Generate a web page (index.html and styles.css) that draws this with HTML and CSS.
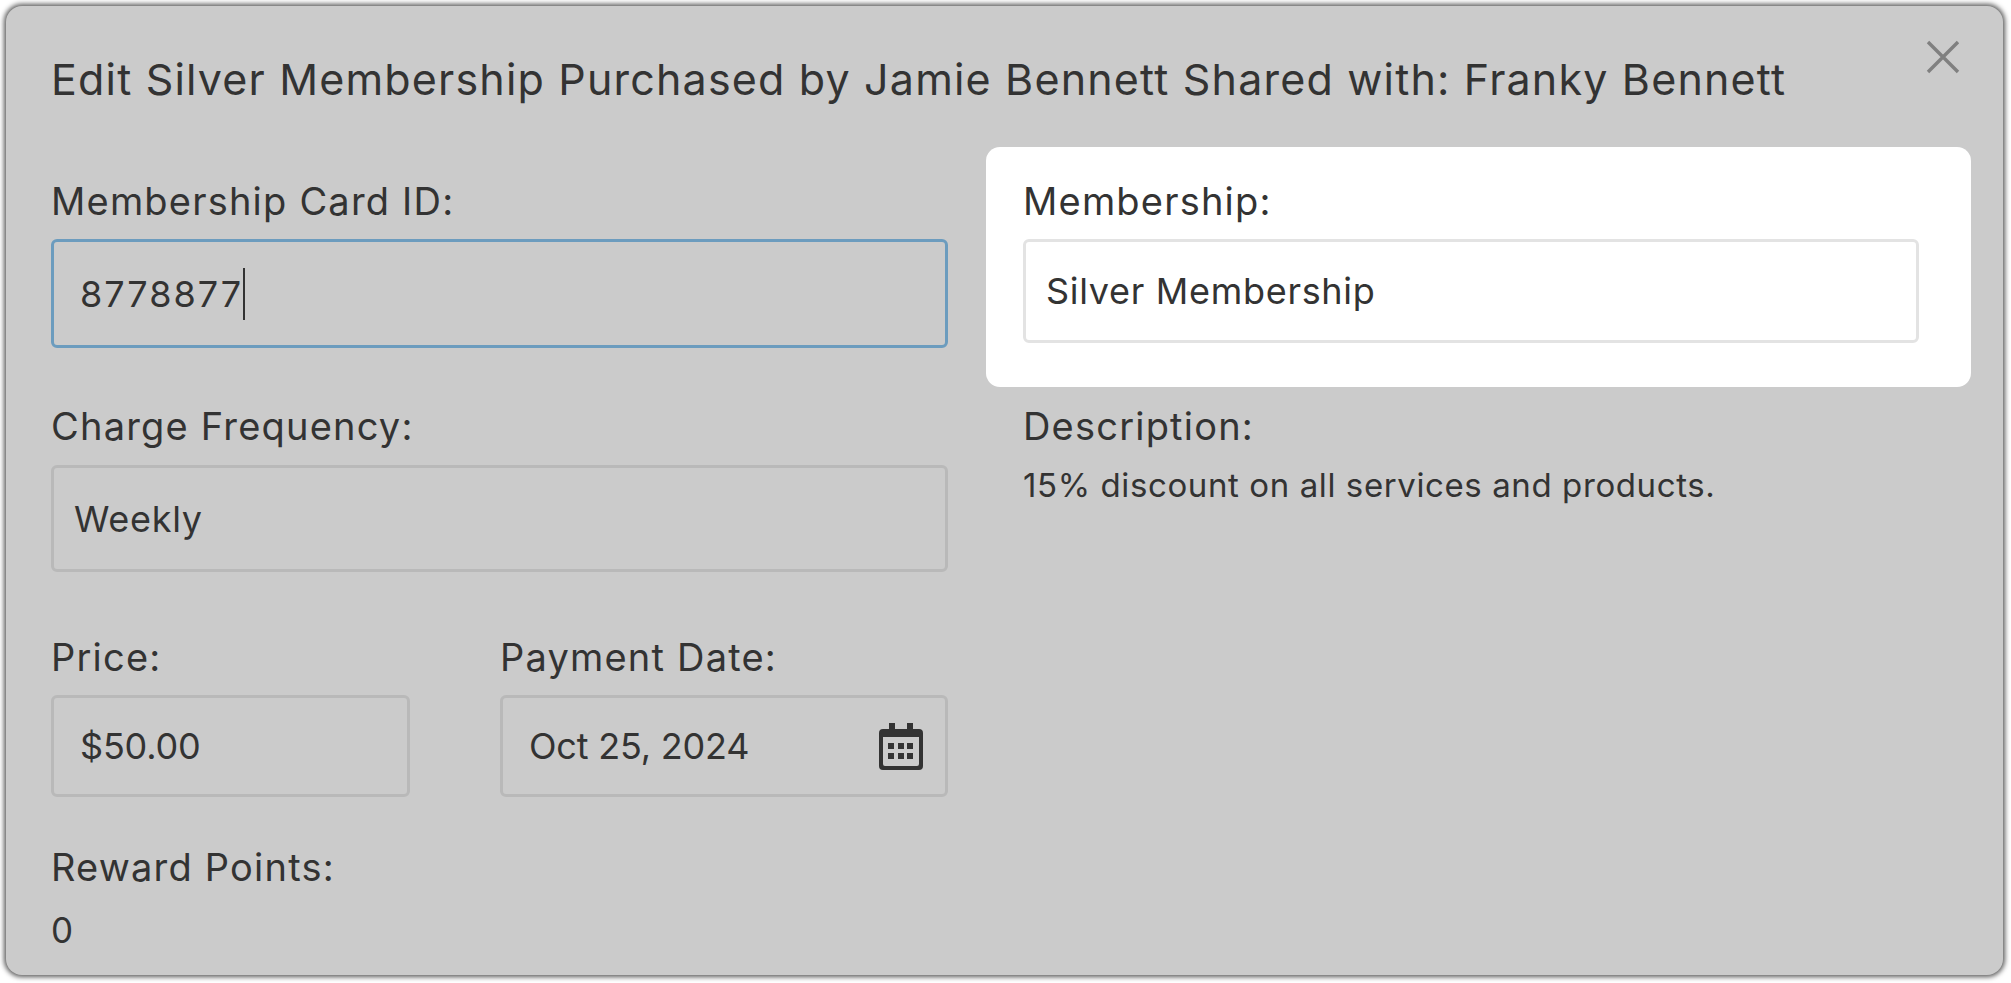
FILE: index.html
```html
<!DOCTYPE html>
<html lang="en">
<head>
    <meta charset="UTF-8">
    <meta name="viewport" content="width=device-width, initial-scale=1.0">
    <title>Edit Membership</title>
    <link rel="stylesheet" href="styles.css">
</head>
<body>
    <div class="dialog">
        <h1 class="dialog-title">Edit Silver Membership Purchased by Jamie Bennett Shared with: Franky Bennett</h1>
        <button class="close-btn" aria-label="Close">
            <svg width="36" height="34" viewBox="0 0 36 34"><path d="M3 2 L33 32 M33 2 L3 32" stroke="#808080" stroke-width="3.4" fill="none"/></svg>
        </button>

        <div class="form-grid">
            <div class="field">
                <label>Membership Card ID:</label>
                <div class="input input-focus">8778877<span class="caret"></span></div>
            </div>
            <div class="field highlight">
                <label>Membership:</label>
                <div class="input input-light">Silver Membership</div>
            </div>

            <div class="field">
                <label>Charge Frequency:</label>
                <div class="input input-tall input-narrow-pad">Weekly</div>
            </div>
            <div class="field">
                <label>Description:</label>
                <p class="description">15% discount on all services and products.</p>
            </div>

            <div class="field-pair">
                <div class="field">
                    <label>Price:</label>
                    <div class="input input-short">$50.00</div>
                </div>
                <div class="field">
                    <label>Payment Date:</label>
                    <div class="input input-short input-date">
                        <span>Oct 25, 2024</span>
                        <svg class="calendar" width="44" height="47" viewBox="0 0 44 47">
                            <rect x="10" y="0" width="6" height="10" fill="#333"/>
                            <rect x="28" y="0" width="6" height="10" fill="#333"/>
                            <path fill-rule="evenodd" fill="#333" d="M4 6 H40 Q44 6 44 10 V43 Q44 47 40 47 H4 Q0 47 0 43 V10 Q0 6 4 6 Z M4 14 V41 Q4 43 6 43 H38 Q40 43 40 41 V14 Z"/>
                            <rect x="9" y="20" width="6" height="6" fill="#333"/>
                            <rect x="19" y="20" width="6" height="6" fill="#333"/>
                            <rect x="28" y="20" width="6" height="6" fill="#333"/>
                            <rect x="9" y="30" width="6" height="6" fill="#333"/>
                            <rect x="19" y="30" width="6" height="6" fill="#333"/>
                            <rect x="28" y="30" width="6" height="6" fill="#333"/>
                        </svg>
                    </div>
                </div>
            </div>
            <div></div>

            <div class="field reward">
                <label>Reward Points:</label>
                <div class="points">0</div>
            </div>
        </div>
    </div>
</body>
</html>
```

FILE: styles.css
```css
* {
    margin: 0;
    padding: 0;
    box-sizing: border-box;
    font-family: Inter, "Open Sans", sans-serif;
}

html, body {
    height: 100%;
    background: white;
    overflow: hidden;
}

body {
    padding: 6px 8px 8px 6px;
    color: #333;
}

.dialog {
    position: relative;
    height: 969px;
    background: #cbcbcb;
    border-radius: 16px;
    padding: 49px 45px 0;
    box-shadow: 0 0 5px 2px rgba(0,0,0,0.65);
}

.dialog-title {
    font-size: 43px;
    font-weight: 400;
    line-height: 48px;
    letter-spacing: 1.18px;
    color: #333;
    margin-bottom: 75px;
}

.close-btn {
    position: absolute;
    top: 34px;
    right: 42px;
    border: none;
    background: none;
    line-height: 0;
}

.form-grid {
    display: grid;
    grid-template-columns: 897px 896px;
    column-gap: 75px;
    row-gap: 55px;
    align-items: start;
}

.field label {
    display: block;
    font-size: 38px;
    line-height: 45px;
    letter-spacing: 1.2px;
    padding-top: 1px;
    margin-bottom: 15px;
}

.input {
    display: flex;
    align-items: center;
    height: 109px;
    padding: 0 26px;
    border: 3px solid #b9b9b9;
    border-radius: 6px;
    font-size: 36px;
    letter-spacing: 0.7px;
    color: #333;
}

.input-focus {
    border-color: #6c9cbe;
    letter-spacing: 2px;
}

.caret {
    display: block;
    width: 2px;
    height: 52px;
    background: #333;
}

.input-light {
    height: 104px;
    background: white;
    border-color: #e3e3e3;
    padding: 0 20px;
}

.input-tall {
    height: 107px;
    margin-top: 16px;
}

.input-narrow-pad {
    padding: 0 20px;
}

.input-short {
    height: 102px;
    letter-spacing: -0.2px;
}

.input-date {
    justify-content: space-between;
    padding-right: 22px;
}

.calendar {
    display: block;
}

.highlight {
    background: white;
    border-radius: 14px;
    margin: -31px -52px -39px -37px;
    padding: 31px 52px 44px 37px;
    height: 240px;
}

.description {
    font-size: 33px;
    line-height: 46px;
    letter-spacing: 0.6px;
    margin-top: -2px;
}

.field-pair {
    display: grid;
    grid-template-columns: 359px 448px;
    column-gap: 90px;
    margin-top: 7px;
}

.reward {
    margin-top: -8px;
}

.points {
    font-size: 35px;
    line-height: 46px;
    margin-top: 17px;
}
```
